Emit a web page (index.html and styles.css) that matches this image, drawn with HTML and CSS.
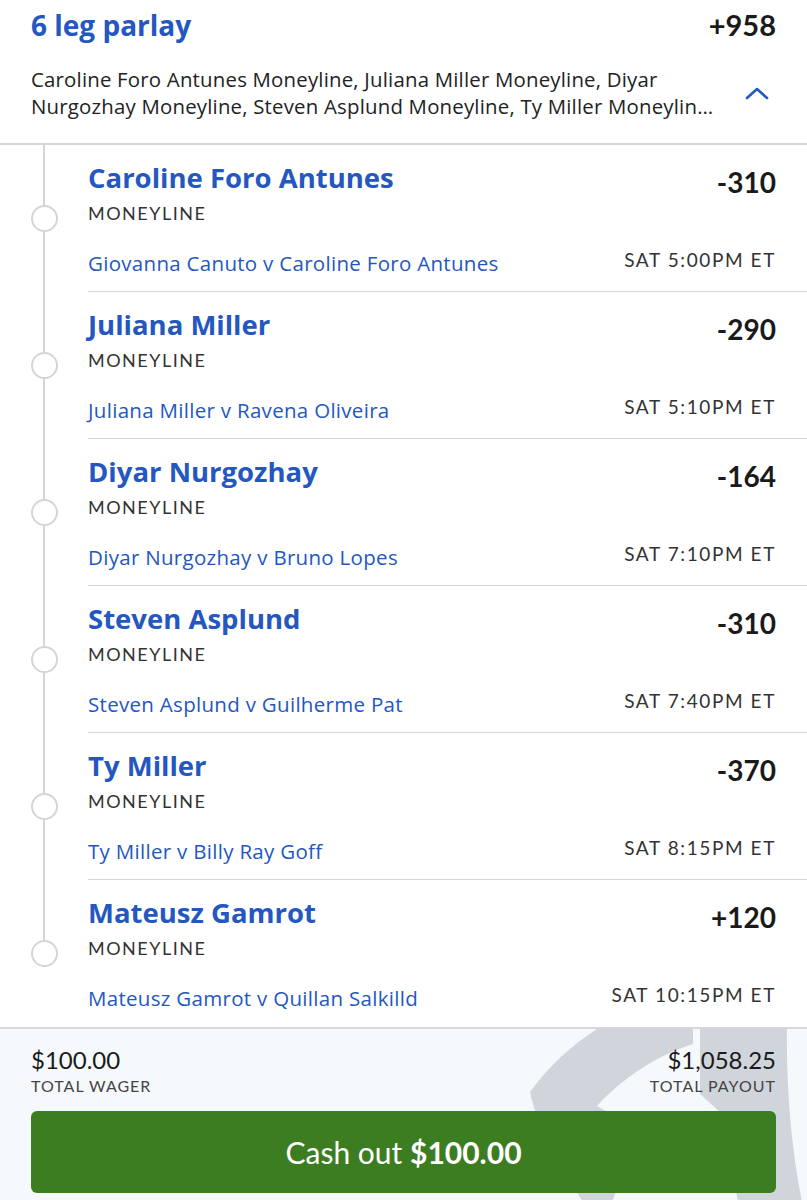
FILE: index.html
```html
<!DOCTYPE html>
<html lang="en">
<head>
  <meta charset="UTF-8">
  <meta name="viewport" content="width=device-width, initial-scale=1.0">
  <title>6 leg parlay</title>
  <link rel="stylesheet" href="styles.css">
</head>
<body>
  <div class="header">
    <div class="title-row">
      <span class="title">6 leg parlay</span>
      <span class="total-odds">+958</span>
    </div>
    <div class="desc-row">
      <p class="desc">Caroline Foro Antunes Moneyline, Juliana Miller Moneyline, Diyar Nurgozhay Moneyline, Steven Asplund Moneyline, Ty Miller Moneyline, Mateusz Gamrot Moneyline</p>
      <svg class="chevron" width="24" height="14" viewBox="0 0 24 14">
        <path d="M2 12 L12 3 L22 12" fill="none" stroke="#2457c0" stroke-width="2.6" stroke-linecap="round" stroke-linejoin="round"/>
      </svg>
    </div>
  </div>

  <div class="legs">
    <div class="leg">
      <div class="rail"><span class="line first"></span><span class="dot"></span><span class="line"></span></div>
      <div class="leg-body">
        <div class="row"><span class="name">Caroline Foro Antunes</span><span class="odds">-310</span></div>
        <div class="market">MONEYLINE</div>
        <div class="row lower"><span class="match">Giovanna Canuto v Caroline Foro Antunes</span><span class="time">SAT 5:00PM ET</span></div>
      </div>
    </div>
    <div class="leg">
      <div class="rail"><span class="line"></span><span class="dot"></span><span class="line"></span></div>
      <div class="leg-body">
        <div class="row"><span class="name">Juliana Miller</span><span class="odds">-290</span></div>
        <div class="market">MONEYLINE</div>
        <div class="row lower"><span class="match">Juliana Miller v Ravena Oliveira</span><span class="time">SAT 5:10PM ET</span></div>
      </div>
    </div>
    <div class="leg">
      <div class="rail"><span class="line"></span><span class="dot"></span><span class="line"></span></div>
      <div class="leg-body">
        <div class="row"><span class="name">Diyar Nurgozhay</span><span class="odds">-164</span></div>
        <div class="market">MONEYLINE</div>
        <div class="row lower"><span class="match">Diyar Nurgozhay v Bruno Lopes</span><span class="time">SAT 7:10PM ET</span></div>
      </div>
    </div>
    <div class="leg">
      <div class="rail"><span class="line"></span><span class="dot"></span><span class="line"></span></div>
      <div class="leg-body">
        <div class="row"><span class="name">Steven Asplund</span><span class="odds">-310</span></div>
        <div class="market">MONEYLINE</div>
        <div class="row lower"><span class="match">Steven Asplund v Guilherme Pat</span><span class="time">SAT 7:40PM ET</span></div>
      </div>
    </div>
    <div class="leg">
      <div class="rail"><span class="line"></span><span class="dot"></span><span class="line"></span></div>
      <div class="leg-body">
        <div class="row"><span class="name">Ty Miller</span><span class="odds">-370</span></div>
        <div class="market">MONEYLINE</div>
        <div class="row lower"><span class="match">Ty Miller v Billy Ray Goff</span><span class="time">SAT 8:15PM ET</span></div>
      </div>
    </div>
    <div class="leg last">
      <div class="rail"><span class="line"></span><span class="dot"></span><span class="line none"></span></div>
      <div class="leg-body">
        <div class="row"><span class="name">Mateusz Gamrot</span><span class="odds">+120</span></div>
        <div class="market">MONEYLINE</div>
        <div class="row lower"><span class="match">Mateusz Gamrot v Quillan Salkilld</span><span class="time">SAT 10:15PM ET</span></div>
      </div>
    </div>
  </div>

  <div class="footer">
    <svg class="watermark" width="307" height="175" viewBox="500 1025 307 175">
      <path d="M530 1090 C550 1062 576 1040 600 1025 L693 1025 L693 1042 C655 1054 622 1077 597 1104 L640 1128 L612 1200 L583 1200 C558 1160 538 1127 530 1090 Z" fill="#d0d5dc"/>
      <path d="M700 1025 L787 1025 C786 1090 792 1150 802 1200 L738 1200 L722 1112 L700 1092 Z" fill="#d0d5dc"/>
    </svg>
    <div class="totals">
      <div class="total">
        <div class="amount">$100.00</div>
        <div class="label">TOTAL WAGER</div>
      </div>
      <div class="total right">
        <div class="amount">$1,058.25</div>
        <div class="label">TOTAL PAYOUT</div>
      </div>
    </div>
    <button class="cashout">Cash out <b>$100.00</b></button>
  </div>
</body>
</html>
```

FILE: styles.css
```css
body {
  margin: 0;
  font-family: Lato, "Liberation Sans", sans-serif;
  background: #fff;
  color: #1a1a1a;
}
.header {
  padding: 8px 31px 23px;
  border-bottom: 2px solid #d5d7db;
}
.title-row {
  display: flex;
  justify-content: space-between;
  align-items: center;
  line-height: 34px;
}
.title {
  font-family: "Open Sans", Lato, sans-serif;
  font-size: 28px;
  font-weight: 700;
  color: #2457c0;
}
.total-odds {
  font-size: 29px;
  font-weight: 700;
  color: #1a1a1a;
}
.desc-row {
  display: flex;
  align-items: center;
  justify-content: space-between;
  margin-top: 24px;
}
.desc {
  margin: 0;
  width: 684px;
  font-family: "Open Sans", Lato, sans-serif;
  font-size: 20.4px;
  letter-spacing: 0.2px;
  line-height: 27px;
  color: #222;
  display: -webkit-box;
  -webkit-line-clamp: 2;
  -webkit-box-orient: vertical;
  overflow: hidden;
}
.chevron {
  margin-right: 7px;
}
.leg {
  display: flex;
}
.rail {
  width: 88px;
  flex-shrink: 0;
  display: flex;
  flex-direction: column;
  align-items: center;
}
.line {
  flex: 1;
  width: 2px;
  background: #d3d5d9;
}
.line.none {
  background: none;
}
.dot {
  width: 23px;
  height: 23px;
  border: 2px solid #d3d5d9;
  border-radius: 50%;
  flex-shrink: 0;
}
.leg-body {
  flex: 1;
  padding: 20px 31px 15px 0;
  border-bottom: 1px solid #d5d7db;
}
.leg.last .leg-body {
  border-bottom: none;
  padding-bottom: 16px;
}
.row {
  display: flex;
  justify-content: space-between;
  align-items: flex-end;
  line-height: 30px;
}
.name {
  font-family: "Open Sans", Lato, sans-serif;
  font-size: 27.5px;
  font-weight: 700;
  color: #2457c0;
  position: relative;
  top: -2px;
}
.odds {
  font-size: 28px;
  font-weight: 700;
  color: #1a1a1a;
  position: relative;
  top: 2px;
}
.market {
  margin-top: 6px;
  font-size: 18px;
  line-height: 24px;
  letter-spacing: 1.5px;
  color: #333;
}
.row.lower {
  margin-top: 25px;
  line-height: 26px;
  align-items: center;
}
.match {
  font-family: "Open Sans", Lato, sans-serif;
  font-size: 20.5px;
  letter-spacing: 0.3px;
  color: #2457c0;
}
.time {
  font-size: 19px;
  letter-spacing: 1.6px;
  color: #333;
  position: relative;
  top: -3px;
}
.footer {
  position: relative;
  overflow: hidden;
  background: #f6f9fc;
  border-top: 2px solid #d5d7db;
  padding: 17px 31px 9px;
}
.watermark {
  position: absolute;
  right: 0;
  top: -2px;
}
.totals {
  position: relative;
  display: flex;
  justify-content: space-between;
}
.total.right {
  text-align: right;
}
.amount {
  font-size: 24px;
  line-height: 28px;
  color: #1a1a1a;
}
.label {
  margin-top: 2px;
  font-size: 16px;
  line-height: 20px;
  letter-spacing: 1px;
  color: #444;
}
.cashout {
  position: relative;
  display: block;
  width: 100%;
  height: 82px;
  margin-top: 15px;
  border: none;
  border-radius: 6px;
  background: #3c7d22;
  color: #fff;
  font-family: Lato, "Liberation Sans", sans-serif;
  font-size: 30px;
}
.cashout b {
  font-weight: 700;
}
```
